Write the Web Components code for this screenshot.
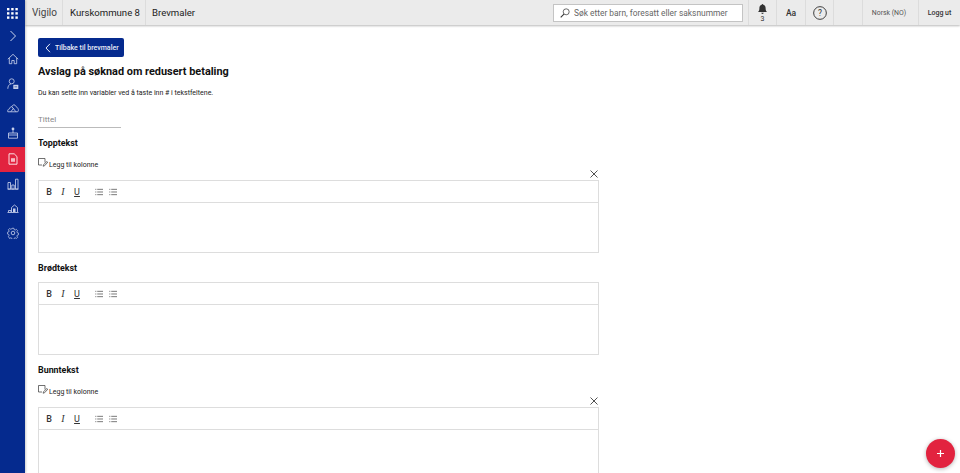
<!DOCTYPE html>
<html><head><meta charset="utf-8"><style>
html,body{margin:0;height:100%;overflow:hidden;font-family:Roboto,sans-serif;background:#fff}
app-shell{height:473px}
</style></head><body>
<app-shell>
<side-bar slot="side"></side-bar>
<top-bar slot="top"></top-bar>
<back-button>Tilbake til brevmaler</back-button>
<h1-title>Avslag på søknad om redusert betaling</h1-title>
<p-note>Du kan sette inn variabler ved å taste inn # i tekstfeltene.</p-note>
<title-field></title-field>
<editor-section heading="Topptekst" column></editor-section>
<editor-section heading="Brødtekst"></editor-section>
<editor-section heading="Bunntekst" column></editor-section>
<fab-button slot="fab"></fab-button>
</app-shell>
<script>
function def(name,html,init){customElements.define(name,class extends HTMLElement{connectedCallback(){if(this.shadowRoot)return;const r=this.attachShadow({mode:'open'});r.innerHTML=html;if(init)init(this,r)}})}
def('app-shell',`<style>:host{display:grid;grid-template-columns:25px 1fr;grid-template-rows:25px 1fr;width:960px;position:relative;overflow:hidden}
::slotted([slot=side]){grid-row:1/3}
main{padding:13px 0 0 13px;overflow:hidden;min-height:0}
.fab{position:absolute;right:5px;bottom:5px}</style>
<slot name="side"></slot><slot name="top"></slot><main><slot></slot></main><div class="fab"><slot name="fab"></slot></div>`);
const ic=(d)=>`<svg width="12" height="12" viewBox="0 0 12 12" fill="none" stroke="#c6cfea" stroke-width=".85">${d}</svg>`;
def('side-bar',`<style>:host{display:flex;flex-direction:column;background:#052a8e;height:473px;box-shadow:1px 0 2px rgba(0,0,0,.2);position:relative;z-index:2}
.i{height:24.5px;display:flex;align-items:center;justify-content:center;flex:none}
.a{background:#e2233f;margin-top:2px}
.g{height:26px}.c{height:19px;margin-bottom:2px}</style>
<div class="i g"><svg width="11" height="11" viewBox="0 0 11 11" fill="#fff"><rect x="0" y="0" width="2.4" height="2.4"/><rect x="4.2" y="0" width="2.4" height="2.4"/><rect x="8.4" y="0" width="2.4" height="2.4"/><rect y="4.2" width="2.4" height="2.4"/><rect x="4.2" y="4.2" width="2.4" height="2.4"/><rect x="8.4" y="4.2" width="2.4" height="2.4"/><rect y="8.4" width="2.4" height="2.4"/><rect x="4.2" y="8.4" width="2.4" height="2.4"/><rect x="8.4" y="8.4" width="2.4" height="2.4"/></svg></div>
<div class="i c"><svg width="8" height="12" viewBox="0 0 8 12" fill="none" stroke="#cfd7ee" stroke-width="1"><path d="M1.5 1l5 5-5 5"/></svg></div>
<div class="i">${ic('<path d="M.8 6.200L6 1.300l5.200 4.900M2.300 5v5.700h2.500V7.500h2.400v3.200h2.500V5"/>')}</div>
<div class="i">${ic('<circle cx="4.700" cy="3.300" r="2.500"/><path d="M.8 10.800c0-2.800 1.400-4.500 3.200-5"/><rect x="6.300" y="6.800" width="5" height="4.200" fill="#c6cfea" stroke="none"/><path d="M7.500 8.800h2.600" stroke="#052a8e" stroke-width=".6"/>')}</div>
<div class="i">${ic('<path d="M.8 9.800c-.4-1.500.4-2.700 1.700-3 .1-1.300 1.200-2.100 2.300-2.100C5.400 3 7 2.400 8 3.200L11 6.600c.6 1 .5 2.400-.3 3.200zM3.800 9.800L6.300 6.600 9 9.800M4.800 4.700L7 7.300"/>')}</div>
<div class="i">${ic('<circle cx="6" cy="2" r="1.400" fill="#c6cfea" stroke="none"/><path d="M6 3.300v2.700M1.500 6h9v5.200h-9z"/><path d="M1.500 8h9"/>')}</div>
<div class="i a">${ic('<path d="M2 .8h5.200L10 3.600v7.600H2z" stroke="#fff"/><rect x="4" y="5.200" width="4" height="3.600" fill="#f6bcc5" stroke="none"/>')}</div>
<div class="i">${ic('<path d="M1 4.500h2.500V11H1zM4.800 7h2.400v4H4.800zM8.500 1.200H11V11H8.500zM.5 11.200h11"/>')}</div>
<div class="i">${ic('<path d="M.5 10.500h11M1.500 10V8.500h2.500V10M4.500 10V5.500L7.500 3l3 2.500V10"/><rect x="6" y="6.500" width="2.500" height="3.500" fill="#c6cfea" stroke="none"/>')}</div>
<div class="i">${ic('<circle cx="6" cy="6" r="1.800"/><path d="M5 .8h2l.3 1.500 1.200.5 1.300-.8 1.300 1.400-.8 1.300.5 1.100 1.400.4v1.800l-1.400.4-.5 1.100.8 1.300-1.300 1.400-1.300-.8-1.200.5-.3 1.400H5l-.3-1.400-1.200-.5-1.300.8L.9 9.900l.8-1.300-.5-1.100-1.400-.4V5.300l1.400-.4.500-1.100-.8-1.300 1.300-1.400 1.300.8 1.200-.5z" transform="translate(.6 .55) scale(.9)"/>')}</div>`);
def('top-bar',`<style>:host{display:flex;height:25px;background:#ebebeb;box-shadow:0 1px 2px rgba(0,0,0,.28);position:relative;z-index:1;color:#222;align-items:stretch;white-space:nowrap}
.c{display:flex;align-items:center;justify-content:center;border-right:1px solid #dcdcdc;box-sizing:border-box;flex:none;opacity:.999}
.l{font-size:9.600px;justify-content:flex-start;padding-left:7px}
.s{flex:1}
.search{margin-top:4px;height:18px;width:190px;box-sizing:border-box;background:#fff;border:1px solid #c4c4c4;display:flex;align-items:center;font-size:8.400px;color:#666;gap:4px;padding-left:6px;flex:none}
.search span{opacity:.999}
.sw{border-right:1px solid #dcdcdc;padding-right:5px;display:flex;flex:none}
.bell{flex-direction:column;font-size:7px;line-height:8px;color:#333;padding-top:1px}
</style>
<div class="c l" style="width:38px;color:#444;font-size:10px">Vigilo</div>
<div class="c l" style="width:83px">Kurskommune 8</div>
<div class="c l" style="width:55px;border:0;padding-left:6px">Brevmaler</div>
<div class="s"></div>
<div class="sw"><div class="search"><svg width="10" height="10" viewBox="0 0 11 11" fill="none" stroke="#333" stroke-width=".8"><circle cx="6.800" cy="4.200" r="3.300"/><path d="M4.300 6.700L.8 10.200" stroke-width="1.200"/></svg><span>Søk etter barn, foresatt eller saksnummer</span></div></div>
<div class="c bell" style="width:28px"><svg width="9" height="11" viewBox="0 0 9 11" fill="#333"><path d="M4.500 0c.5 0 .8.300.8.800C7 1.200 7.600 2.500 7.600 4c0 2 .4 3 1.400 4H0c1-1 1.400-2 1.400-4 0-1.500.6-2.800 2.300-3.200 0-.5.300-.8.800-.8zM3.300 8.800h2.400c0 .7-.5 1.200-1.200 1.200s-1.200-.5-1.200-1.200z"/></svg><span>3</span></div>
<div class="c" style="width:29px;font-size:8.500px;font-weight:500;color:#333">Aa</div>
<div class="c" style="width:28px"><svg width="14" height="14" viewBox="0 0 15 15"><circle cx="7.500" cy="7.500" r="6.800" fill="none" stroke="#333"/><text x="7.500" y="10.600" text-anchor="middle" font-size="9" font-family="Roboto" fill="#333">?</text></svg></div>
<div class="c" style="width:29px"></div>
<div class="c" style="width:56px;font-size:6.900px;color:#555;padding-right:3px">Norsk (NO)</div>
<div class="c" style="width:41px;font-size:7px;font-weight:500;color:#333;border:0">Logg ut</div>`);
def('back-button',`<style>:host{display:inline-flex;align-items:center;height:19px;width:86px;background:#052a8e;border-radius:2px;color:#e8ecf8;font-size:7px;font-weight:500;box-sizing:border-box;padding-left:7px;gap:4px;vertical-align:top;white-space:nowrap}span{opacity:.999}</style>
<svg width="6" height="10" viewBox="0 0 6 10" fill="none" stroke="#e8ecf8"><path d="M5 .8L1 5l4 4.200"/></svg><span><slot></slot></span>`);
def('h1-title',`<style>:host{display:block;font-size:10.900px;font-weight:700;color:#111;line-height:14px;margin-top:8px;opacity:.999}</style><slot></slot>`);
def('p-note',`<style>:host{display:block;font-size:7px;color:#222;line-height:10px;margin-top:9px;opacity:.999}</style><slot></slot>`);
def('title-field',`<style>:host{display:block;width:83px;height:14px;margin-top:15px;border-bottom:1px solid #bbb;font-size:8px;color:#888;line-height:14px;box-sizing:content-box;opacity:.999}</style>Tittel`);
def('editor-section',`<style>:host{display:block;width:561px;position:relative}
h2{font-size:8.900px;font-weight:700;color:#111;margin:0;line-height:12px;padding-top:9px;opacity:.999}
.add{display:flex;align-items:flex-end;gap:1px;font-size:7px;color:#222;height:11px;margin-top:9px}
.add span{opacity:.999}
.add svg{margin-bottom:2px}
.x{display:flex;justify-content:flex-end;height:11px}
.ed{border:1px solid #ddd;box-sizing:border-box;height:73px}
.bar{height:22px;border-bottom:1px solid #ddd;display:flex;align-items:center;box-sizing:border-box;padding-left:3px}
.b{width:14px;height:10px;font-size:9px;line-height:10px;text-align:center;color:#333;display:flex;justify-content:center;opacity:.999;align-items:center}
.sp{width:8px}
</style>
<h2></h2><div class="add"><svg width="10" height="9" viewBox="0 0 10 9" fill="none" stroke="#333" stroke-width=".7"><path d="M7 4.500V.5H.5v6.500h3.500M9.300 3L5.500 6.800l-.4 1.400 1.400-.4L10 4"/></svg><span>Legg til kolonne</span></div>
<div class="x"><svg width="8" height="8" viewBox="0 0 8 8" stroke="#333" stroke-width=".85" style="margin-right:1px;margin-top:1px"><path d="M.5 .5l7 7M7.500 .5l-7 7"/></svg></div>
<div class="ed"><div class="bar">
<span class="b" style="font-weight:500">B</span><span class="b" style="font-style:italic;font-family:'Liberation Serif',serif;font-size:10px">I</span><span class="b" style="text-decoration:underline">U</span><span class="sp"></span>
<span class="b"><svg width="8" height="8" viewBox="0 0 9 8" stroke="#444" stroke-width=".8"><path d="M2.500 1H9M2.500 4H9M2.500 7H9M.3 1h1.200M.3 4h1.200M.3 7h1.200"/></svg></span>
<span class="b"><svg width="8" height="8" viewBox="0 0 9 8" stroke="#444" stroke-width=".8"><path d="M2.500 1H9M2.500 4H9M2.500 7H9M.3 1h1.200M.3 4h1.200M.3 7h1.200"/></svg></span>
</div></div>`,(h,r)=>{r.querySelector('h2').textContent=h.getAttribute('heading');if(!h.hasAttribute('column')){r.querySelector('.add').remove();r.querySelector('.x').remove();r.querySelector('h2').style.marginBottom='8px'}});
def('fab-button',`<style>:host{display:flex;align-items:center;justify-content:center;width:29px;height:29px;border-radius:50%;background:#e2233f;box-shadow:0 1px 4px rgba(0,0,0,.3)}</style><svg width="7" height="7" viewBox="0 0 7 7" stroke="#fff" stroke-width="1.200"><path d="M3.500 0v7M0 3.500h7"/></svg>`);
</script>
</body></html>
